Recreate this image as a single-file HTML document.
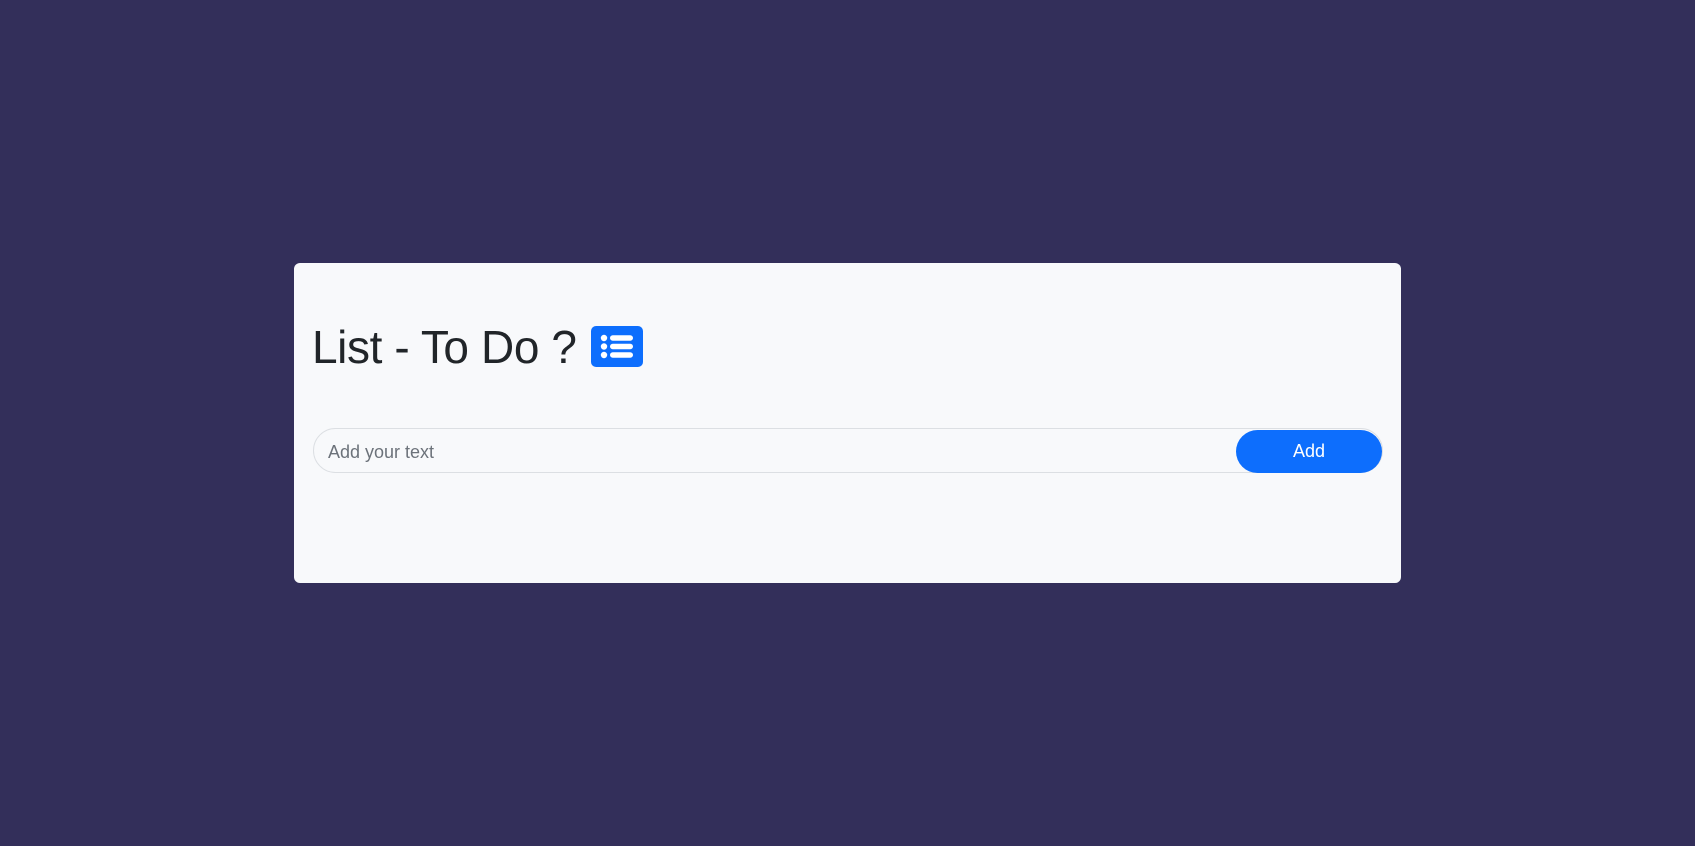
<!DOCTYPE html>
<html><head><style>
html,body{margin:0;padding:0;}
body{width:1695px;height:846px;background:#332f5a;position:relative;font-family:"Liberation Sans",sans-serif;overflow:hidden;}
.card{position:absolute;left:294px;top:263px;width:1107px;height:320px;background:#f8f9fb;border-radius:6px;}
.title{position:absolute;left:312px;top:318px;font-size:46px;color:#212529;line-height:58px;white-space:nowrap;letter-spacing:-0.4px;}
.icon{position:absolute;left:591px;top:326px;width:52px;height:41px;background:#0d6efd;border-radius:5px;}
.input{position:absolute;left:313px;top:428px;width:1068px;height:43px;border:1px solid #dcdfe3;border-radius:23px;background:#f8f9fb;}
.ph{position:absolute;left:328px;top:442px;font-size:18px;color:#6c727a;}
.btn{position:absolute;left:1236px;top:430px;width:146px;height:43px;background:#0d6efd;border-radius:22px;color:#fff;font-size:18px;text-align:center;line-height:43px;}
</style></head><body>
<div class="card"></div>
<div class="title">List - To Do ?</div>
<div class="icon"><svg width="52" height="41" viewBox="0 0 52 41">
<g fill="#fff"><circle cx="13" cy="12" r="3.2"/><circle cx="13" cy="20.5" r="3.2"/><circle cx="13" cy="29" r="3.2"/>
<rect x="19" y="9.3" width="23" height="5.4" rx="2.7"/><rect x="19" y="17.8" width="23" height="5.4" rx="2.7"/><rect x="19" y="26.3" width="23" height="5.4" rx="2.7"/></g></svg></div>
<div class="input"></div>
<div class="ph">Add your text</div>
<div class="btn">Add</div>
</body></html>
